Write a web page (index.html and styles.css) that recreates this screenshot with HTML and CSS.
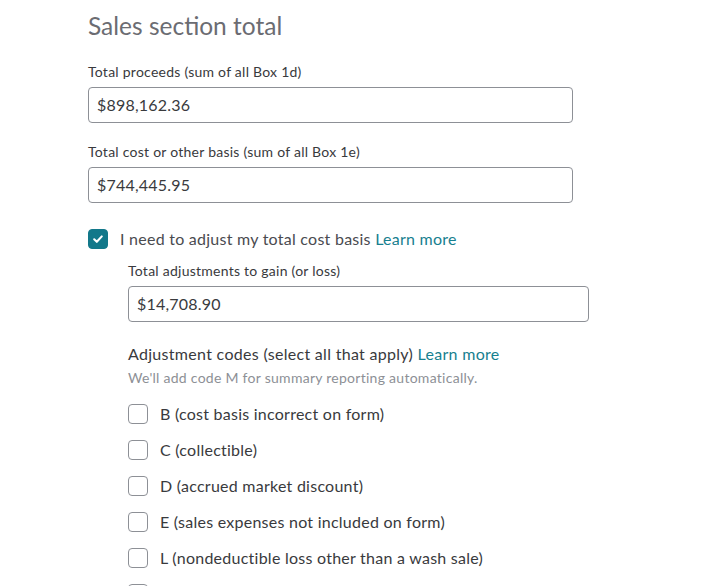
FILE: index.html
```html
<!DOCTYPE html>
<html>
<head>
<meta charset="utf-8">
<link rel="stylesheet" href="styles.css">
</head>
<body>
<div class="page">
  <h1 class="title">Sales section total</h1>

  <div class="field">
    <label class="label">Total proceeds (sum of all Box 1d)</label>
    <div class="input">$898,162.36</div>
  </div>

  <div class="field">
    <label class="label">Total cost or other basis (sum of all Box 1e)</label>
    <div class="input">$744,445.95</div>
  </div>

  <div class="check-row main-check">
    <span class="box checked">
      <svg width="14" height="14" viewBox="0 0 14 14"><path d="M3.2 7.3 L5.8 9.8 L10.8 4.4" fill="none" stroke="#fff" stroke-width="2.1" stroke-linecap="round" stroke-linejoin="round"/></svg>
    </span>
    <span class="check-text">I need to adjust my total cost basis <a class="link">Learn more</a></span>
  </div>

  <div class="indent">
    <div class="field">
      <label class="label">Total adjustments to gain (or loss)</label>
      <div class="input wide">$14,708.90</div>
    </div>

    <div class="codes-head">Adjustment codes (select all that apply) <a class="link">Learn more</a></div>
    <div class="hint">We'll add code M for summary reporting automatically.</div>

    <div class="codes">
      <div class="check-row"><span class="box"></span><span class="check-text">B (cost basis incorrect on form)</span></div>
      <div class="check-row"><span class="box"></span><span class="check-text">C (collectible)</span></div>
      <div class="check-row"><span class="box"></span><span class="check-text">D (accrued market discount)</span></div>
      <div class="check-row"><span class="box"></span><span class="check-text">E (sales expenses not included on form)</span></div>
      <div class="check-row"><span class="box"></span><span class="check-text">L (nondeductible loss other than a wash sale)</span></div>
      <div class="check-row"><span class="box"></span><span class="check-text">O (other)</span></div>
    </div>
  </div>
</div>
</body>
</html>
```
FILE: styles.css
```css
html, body {
  margin: 0;
  padding: 0;
  background: #fff;
  overflow: hidden;
}
body {
  font-family: Lato, "Open Sans", sans-serif;
  color: #393a3d;
}
.page {
  padding: 10px 0 0 88px;
  width: 485px;
}
.title {
  margin: 0 0 21px 0;
  font-size: 24.5px;
  line-height: 32px;
  font-weight: 400;
  color: #6b6c72;
}
.field {
  display: flex;
  flex-direction: column;
}
.field + .field {
  margin-top: 20px;
}
.label {
  font-size: 14px;
  line-height: 18px;
  letter-spacing: 0.25px;
  margin-bottom: 6px;
  color: #393a3d;
}
.input {
  box-sizing: border-box;
  height: 36px;
  border: 1px solid #8d9096;
  border-radius: 4px;
  padding: 0 8px;
  font-size: 16px;
  letter-spacing: 0.2px;
  line-height: 34px;
  color: #393a3d;
}
.input.wide {
  width: 461px;
}
.check-row {
  display: flex;
  align-items: center;
  height: 20px;
}
.main-check {
  margin-top: 26px;
}
.box {
  box-sizing: border-box;
  width: 20px;
  height: 20px;
  border: 1px solid #8d9096;
  border-radius: 4px;
  flex: none;
  display: flex;
  align-items: center;
  justify-content: center;
}
.box.checked {
  background: #12788a;
  border-color: #12788a;
}
.check-text {
  margin-left: 12px;
  font-size: 16px;
  letter-spacing: 0.25px;
  line-height: 20px;
  color: #393a3d;
  white-space: nowrap;
}
.main-check .check-text {
  color: #4a4b50;
}
.link {
  color: #17808f;
}
.indent {
  padding-left: 40px;
  margin-top: 13px;
}
.codes-head {
  margin-top: 22px;
  font-size: 16px;
  letter-spacing: 0.3px;
  line-height: 20px;
}
.hint {
  margin-top: 5px;
  font-size: 14px;
  letter-spacing: 0.27px;
  line-height: 18px;
  color: #8d9096;
}
.codes {
  margin-top: 17px;
  display: flex;
  flex-direction: column;
  gap: 16px;
}
```
